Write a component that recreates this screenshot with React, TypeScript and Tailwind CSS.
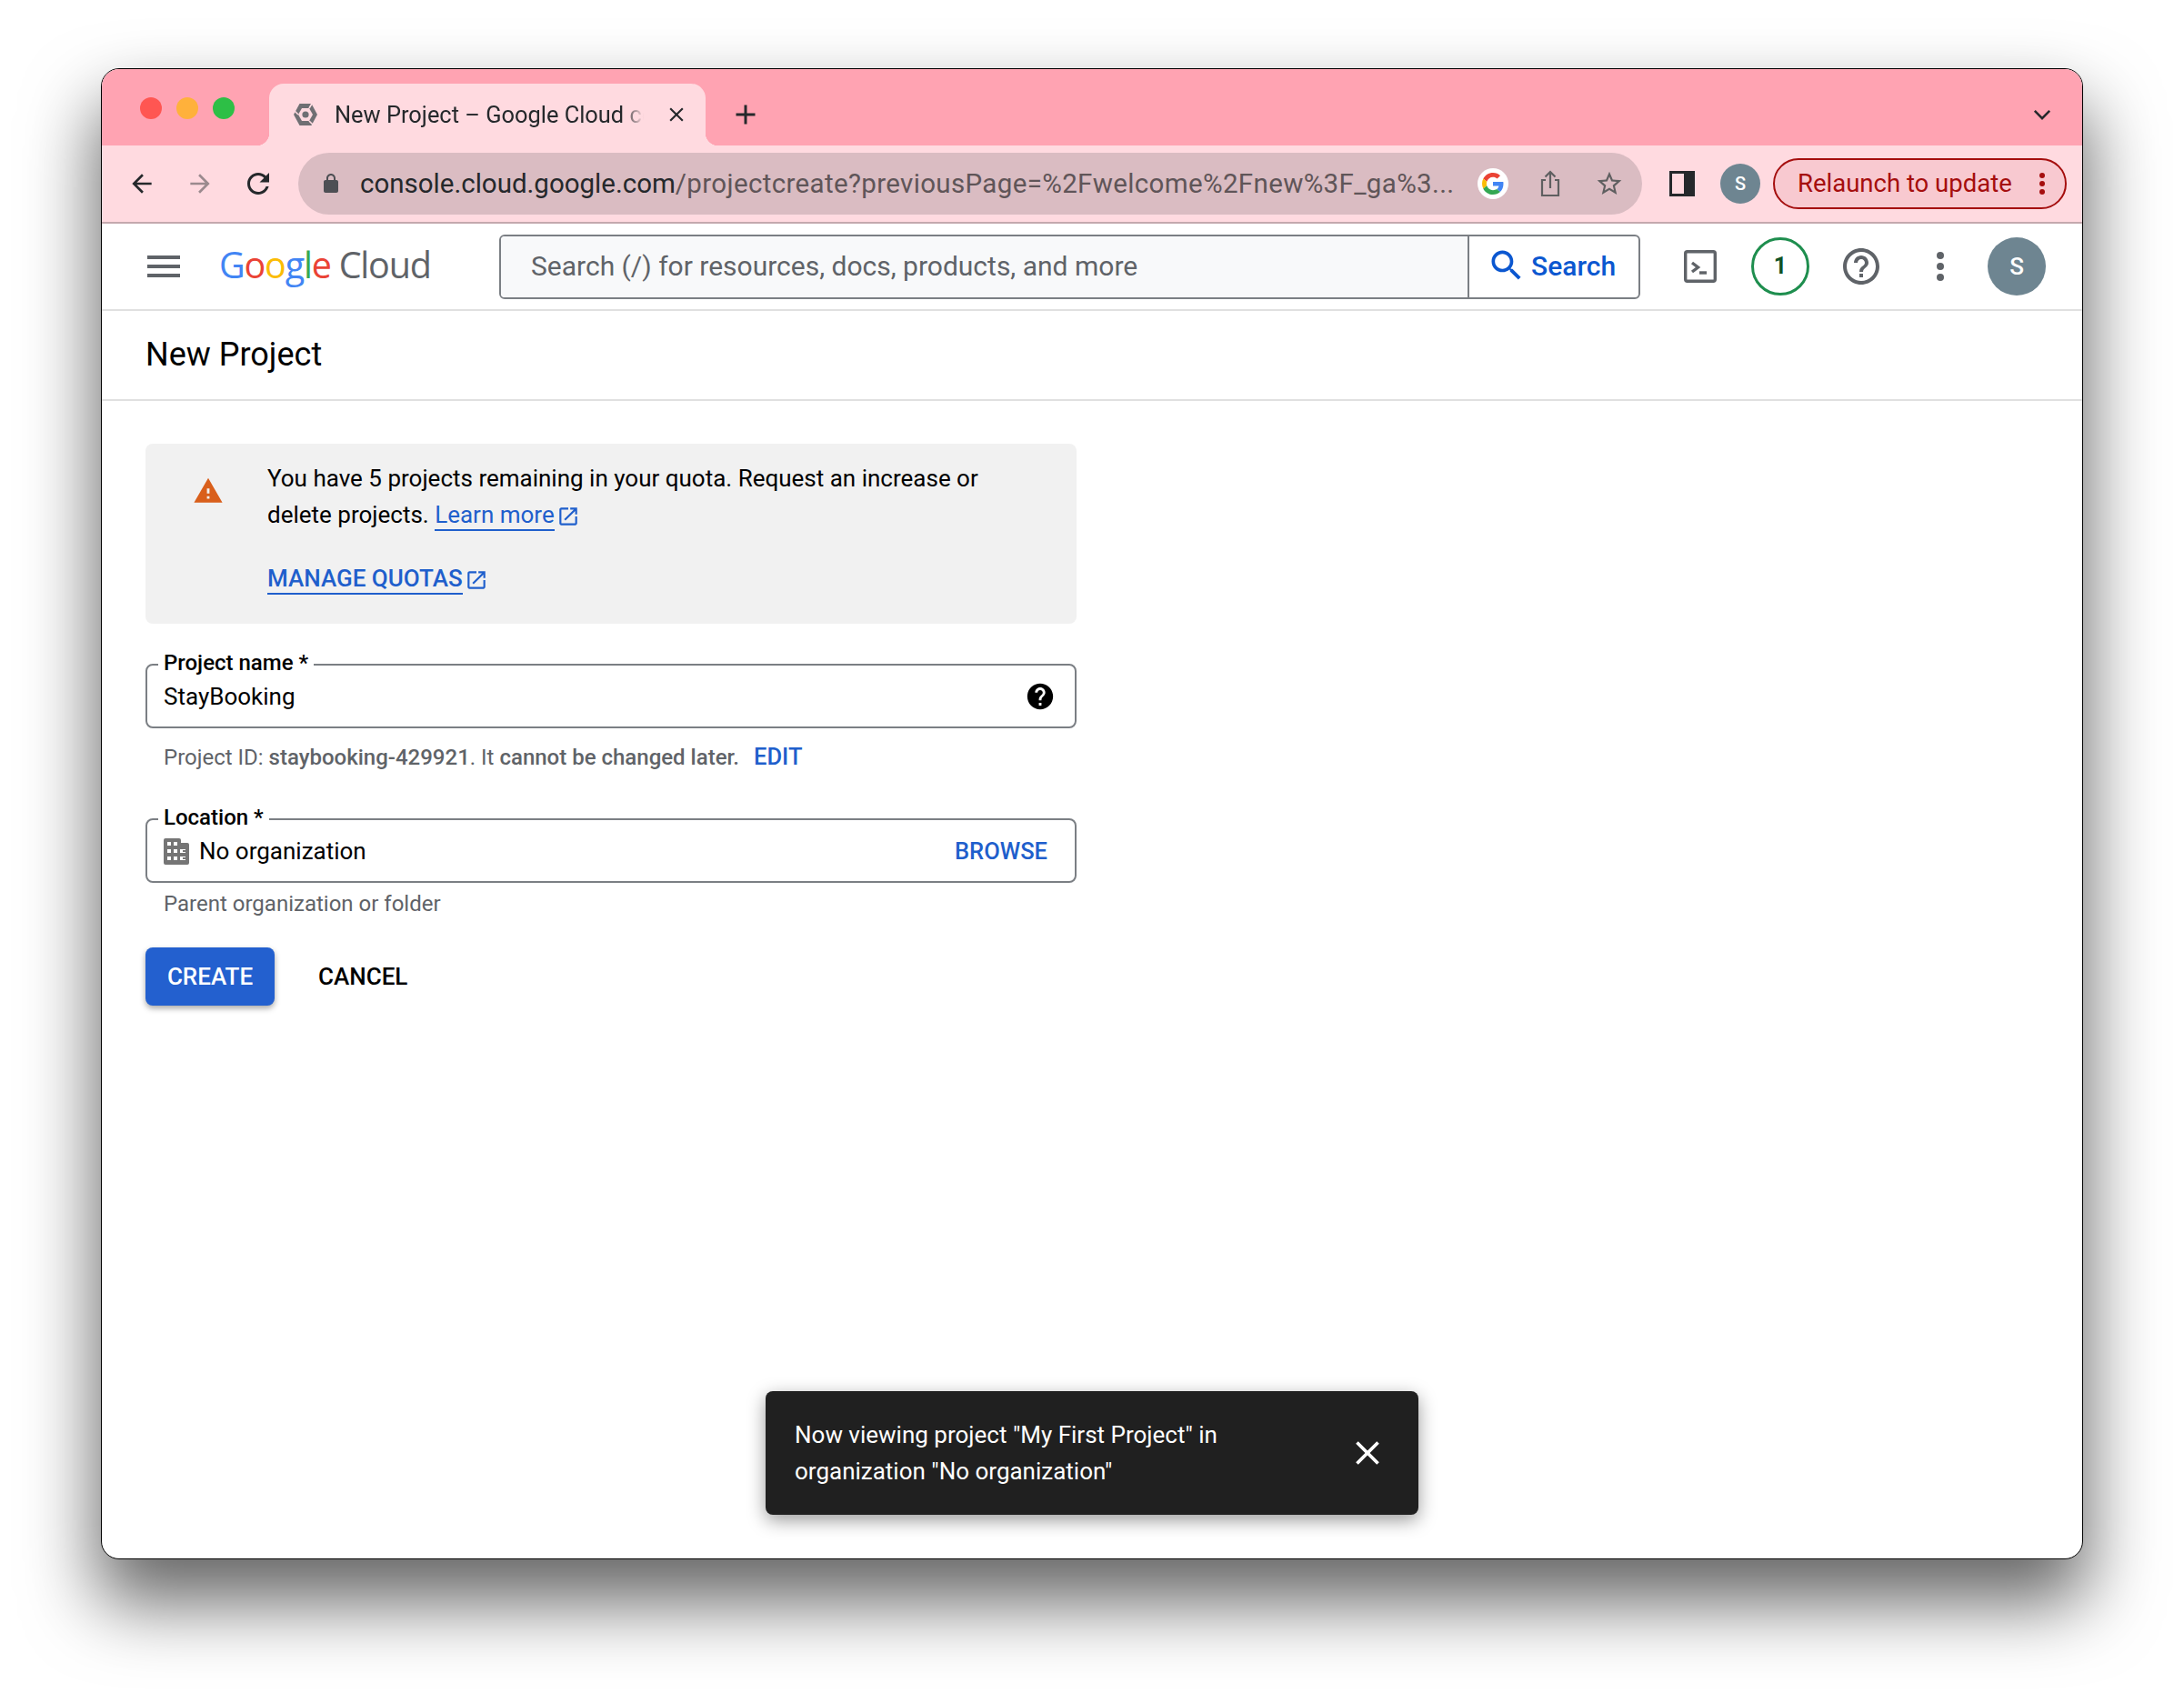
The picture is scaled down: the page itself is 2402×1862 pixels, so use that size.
import type { ReactNode } from "react"

const menuPath = "M3 18h18v-2H3v2zm0-5h18v-2H3v2zm0-7v2h18V6H3z"
const backPath = "M20 11H7.83l5.59-5.59L12 4l-8 8 8 8 1.41-1.41L7.83 13H20v-2z"
const forwardPath = "M12 4l-1.41 1.41L16.17 11H4v2h12.17l-5.58 5.59L12 20l8-8z"
const refreshPath =
  "M17.65 6.35C16.2 4.9 14.21 4 12 4c-4.42 0-7.99 3.58-7.99 8s3.57 8 7.99 8c3.73 0 6.84-2.55 7.73-6h-2.08c-.82 2.33-3.04 4-5.65 4-3.31 0-6-2.69-6-6s2.69-6 6-6c1.66 0 3.14.69 4.22 1.78L13 11h7V4l-2.35 2.35z"
const searchPath =
  "M15.5 14h-.79l-.28-.27C15.41 12.59 16 11.11 16 9.5 16 5.91 13.09 3 9.5 3S3 5.91 3 9.5 5.91 16 9.5 16c1.61 0 3.09-.59 4.23-1.57l.27.28v.79l5 4.99L20.49 19l-4.99-5zm-6 0C7.01 14 5 11.99 5 9.5S7.01 5 9.5 5 14 7.01 14 9.5 11.99 14 9.5 14z"
const helpOutlinePath =
  "M11 18h2v-2h-2v2zm1-16C6.48 2 2 6.48 2 12s4.48 10 10 10 10-4.48 10-10S17.52 2 12 2zm0 18c-4.41 0-8-3.59-8-8s3.59-8 8-8 8 3.59 8 8-3.59 8-8 8zm0-14c-2.21 0-4 1.79-4 4h2c0-1.1.9-2 2-2s2 .9 2 2c0 2-3 1.75-3 5h2c0-2.25 3-2.5 3-5 0-2.21-1.79-4-4-4z"
const helpFilledPath =
  "M12 2C6.48 2 2 6.48 2 12s4.48 10 10 10 10-4.48 10-10S17.52 2 12 2zm1 17h-2v-2h2v2zm2.07-7.75l-.9.92C13.45 12.9 13 13.5 13 15h-2v-.5c0-1.1.45-2.1 1.17-2.83l1.24-1.26c.37-.36.59-.86.59-1.41 0-1.1-.9-2-2-2s-2 .9-2 2H8c0-2.21 1.79-4 4-4s4 1.79 4 4c0 .88-.36 1.68-.93 2.25z"
const warningPath = "M1 21h22L12 2 1 21zm12-3h-2v-2h2v2zm0-4h-2v-4h2v4z"
const openInNewPath =
  "M19 19H5V5h7V3H5c-1.11 0-2 .9-2 2v14c0 1.1.89 2 2 2h14c1.1 0 2-.9 2-2v-7h-2v7zM14 3v2h3.59l-9.83 9.83 1.41 1.41L19 6.41V10h2V3h-7z"
const closePath =
  "M19 6.41L17.59 5 12 10.59 6.41 5 5 6.41 10.59 12 5 17.59 6.41 19 12 13.41 17.59 19 19 17.59 13.41 12z"
const lockPath =
  "M18 8h-1V6c0-2.76-2.24-5-5-5S7 3.24 7 6v2H6c-1.1 0-2 .9-2 2v10c0 1.1.9 2 2 2h12c1.1 0 2-.9 2-2V10c0-1.1-.9-2-2-2zM9 6c0-1.66 1.34-3 3-3s3 1.34 3 3v2H9V6z"
const starPath =
  "M22 9.24l-7.19-.62L12 2 9.19 8.63 2 9.24l5.46 4.73L5.82 21 12 17.27 18.18 21l-1.63-7.03L22 9.24zM12 15.4l-3.76 2.27 1-4.28-3.32-2.88 4.38-.38L12 6.1l1.71 4.04 4.38.38-3.32 2.88 1 4.28L12 15.4z"

function Icon({ d, className }: { d: string; className: string }) {
  return (
    <svg viewBox="0 0 24 24" fill="currentColor" className={className}>
      <path d={d} />
    </svg>
  )
}

function MoreDots({ className }: { className: string }) {
  return (
    <svg viewBox="0 0 8 32" fill="currentColor" className={className}>
      <circle cx="4" cy="4" r="4" />
      <circle cx="4" cy="16" r="4" />
      <circle cx="4" cy="28" r="4" />
    </svg>
  )
}

function BuildingIcon() {
  return (
    <svg viewBox="0 0 28 29" className="h-[29px] w-[28px] shrink-0 text-[#757575]" fill="currentColor">
      <path
        fillRule="evenodd"
        d="M2 0h15a2 2 0 0 1 2 2v3h7a2 2 0 0 1 2 2v20a2 2 0 0 1-2 2H2a2 2 0 0 1-2-2V2a2 2 0 0 1 2-2zM4 4v4h4V4zm7 0v4h4V4zM4 12v4h4v-4zm7 0v4h4v-4zm7 0v4h6v-1h-3v-2h3v-1zM4 20v4h4v-4zm7 0v4h4v-4zm7 0v4h6v-1h-3v-2h3v-1z"
      />
    </svg>
  )
}

function GoogleG() {
  return (
    <div className="flex h-[34px] w-[34px] items-center justify-center rounded-full bg-white">
      <svg viewBox="0 0 48 48" className="h-[24px] w-[24px]">
        <path fill="#EA4335" d="M24 9.5c3.54 0 6.71 1.22 9.21 3.6l6.85-6.85C35.9 2.38 30.47 0 24 0 14.62 0 6.51 5.38 2.56 13.22l7.98 6.19C12.43 13.72 17.74 9.5 24 9.5z" />
        <path fill="#4285F4" d="M46.98 24.55c0-1.57-.15-3.09-.38-4.55H24v9.02h12.94c-.58 2.96-2.26 5.48-4.78 7.18l7.73 6c4.51-4.18 7.09-10.36 7.09-17.65z" />
        <path fill="#FBBC05" d="M10.53 28.59c-.48-1.45-.76-2.99-.76-4.59s.27-3.14.76-4.59l-7.98-6.19C.92 16.46 0 20.12 0 24c0 3.88.92 7.54 2.56 10.78l7.97-6.19z" />
        <path fill="#34A853" d="M24 48c6.48 0 11.93-2.13 15.89-5.81l-7.73-6c-2.15 1.45-4.92 2.3-8.16 2.3-6.26 0-11.57-4.22-13.47-9.91l-7.98 6.19C6.51 42.62 14.62 48 24 48z" />
      </svg>
    </div>
  )
}

function CloudFavicon() {
  return (
    <svg viewBox="0 0 28 28" className="h-[28px] w-[28px] shrink-0" fill="none">
      <path d="M7.5 2h13L27 14l-6.5 12h-13L1 14z" fill="#6f6f73" />
      <path d="M10 7h8l4 7-4 7h-8l-4-7z" fill="#ffdae0" />
      <path d="M6 14L1 9M18 7l3-5M18 21l4 4" stroke="#ffdae0" strokeWidth="1.6" />
      <circle cx="14" cy="14" r="3.6" fill="#6f6f73" />
    </svg>
  )
}

function TabBar() {
  return (
    <div className="flex h-[84px] shrink-0 bg-[#ffa3b2]">
      <div className="flex w-[184px] shrink-0 gap-[16px] pl-[42px] pt-[31px]">
        <span className="h-[24px] w-[24px] rounded-full bg-[#ff5652]" />
        <span className="h-[24px] w-[24px] rounded-full bg-[#ffb13b]" />
        <span className="h-[24px] w-[24px] rounded-full bg-[#2dbf46]" />
      </div>
      <div className="relative mt-auto flex h-[68px] w-[480px] shrink-0 items-center rounded-t-[16px] bg-[#ffdae0] pl-[26px]">
        <span className="absolute bottom-0 left-[-14px] h-[14px] w-[14px] bg-[radial-gradient(circle_at_0_0,#ffa3b2_14px,#ffdae0_14.5px)]" />
        <span className="absolute bottom-0 right-[-14px] h-[14px] w-[14px] bg-[radial-gradient(circle_at_100%_0,#ffa3b2_14px,#ffdae0_14.5px)]" />
        <CloudFavicon />
        <span className="ml-[18px] w-[340px] overflow-hidden whitespace-nowrap text-[25.4px] text-[#25282b] [mask-image:linear-gradient(to_right,black_93%,transparent_100%)]">
          New Project – Google Cloud console
        </span>
        <Icon d={closePath} className="ml-[23px] h-[26px] w-[26px] text-[#25282b]" />
      </div>
      <Icon d="M19 13h-6v6h-2v-6H5v-2h6V5h2v6h6v2z" className="ml-[26px] mt-[32px] h-[36px] w-[36px] text-[#25282b]" />
      <svg viewBox="0 0 24 24" className="ml-auto mr-[30px] mt-[36px] h-[28px] w-[28px]" fill="none" stroke="#25282b" strokeWidth="2.2">
        <path d="M5 8.5l7 7 7-7" />
      </svg>
    </div>
  )
}

function Toolbar() {
  return (
    <div className="flex h-[86px] shrink-0 items-start border-b-2 border-[#c4a9ae] bg-[#ffdae0] pt-[8px]">
      <div className="flex h-[68px] w-[216px] shrink-0 items-center pl-[28px]">
        <Icon d={backPath} className="h-[32px] w-[32px] text-[#25282b]" />
        <Icon d={forwardPath} className="ml-[32px] h-[32px] w-[32px] text-[#9b8a8e]" />
        <Icon d={refreshPath} className="ml-[30px] h-[36px] w-[36px] text-[#25282b]" />
      </div>
      <div className="flex h-[68px] w-[1478px] shrink-0 items-center rounded-full bg-[#dabcc2] pl-[24px]">
        <Icon d={lockPath} className="h-[24px] w-[24px] shrink-0 text-[#4d4f54]" />
        <span className="ml-[20px] whitespace-nowrap text-[29.5px] text-[#25282b]">
          console.cloud.google.com
          <span className="tracking-[0.35px] text-[#5f5558]">/projectcreate?previousPage=%2Fwelcome%2Fnew%3F_ga%3...</span>
        </span>
        <div className="ml-auto flex items-center pr-[20px]">
          <GoogleG />
          <svg viewBox="0 0 24 32" className="ml-[34px] h-[32px] w-[24px]" fill="none" stroke="#5f5f60" strokeWidth="2.2">
            <path d="M7 12H3v17h18V12h-4M12 21V3M6.5 8.5L12 3l5.5 5.5" />
          </svg>
          <Icon d={starPath} className="ml-[37px] h-[32px] w-[32px] text-[#5f5f60]" />
        </div>
      </div>
      <div className="ml-[30px] mt-[20px] flex h-[28px] w-[28px] shrink-0 border-[3px] border-[#25282b] bg-[#25282b]">
        <span className="h-full w-[13px] bg-[#ffdae0]" />
      </div>
      <div className="ml-[28px] mt-[12px] flex h-[44px] w-[44px] shrink-0 items-center justify-center rounded-full bg-[#6e8591] text-[20px] font-medium text-white">
        S
      </div>
      <div className="ml-[14px] mt-[6px] flex h-[56px] w-[323px] shrink-0 items-center rounded-full border-2 border-[#a50e0e] bg-[#f8c9d0] pl-[25px] text-[27.5px] text-[#a50e0e]">
        Relaunch to update
        <MoreDots className="ml-[30px] h-[24px] w-[6px]" />
      </div>
    </div>
  )
}

function GoogleLogo() {
  return (
    <div className="flex w-[234px] items-baseline whitespace-nowrap pb-[2px] font-['Open_Sans',sans-serif] text-[39.5px] tracking-[-1.2px]">
      <span className="text-[#4285f4]">G</span>
      <span className="text-[#ea4335]">o</span>
      <span className="text-[#fbbc05]">o</span>
      <span className="text-[#4285f4]">g</span>
      <span className="text-[#34a853]">l</span>
      <span className="text-[#ea4335]">e</span>
      <span className="ml-[9px] text-[#5f6368]">Cloud</span>
    </div>
  )
}

function ConsoleHeader() {
  return (
    <div className="flex h-[96px] shrink-0 items-center border-b-2 border-[#e0e0e0] bg-white">
      <Icon d={menuPath} className="ml-[44px] h-[48px] w-[48px] text-[#5f6368]" />
      <div className="ml-[37px]">
        <GoogleLogo />
      </div>
      <div className="ml-[74px] flex h-[71px] w-[1255px] overflow-hidden rounded-[6px] border-2 border-[#7b7f84]">
        <div className="flex w-[1065px] items-center border-r-2 border-[#7b7f84] bg-[#f8f9fa] pb-[2px] pl-[33px] text-[30px] text-[#5f6368]">
          Search (/) for resources, docs, products, and more
        </div>
        <div className="flex items-center pb-[2px] pl-[19px] text-[30px] font-medium text-[#0b57d0]">
          <Icon d={searchPath} className="h-[44px] w-[44px]" />
          <span className="ml-[5px]">Search</span>
        </div>
      </div>
      <svg viewBox="0 0 36 36" className="ml-[48px] h-[36px] w-[36px]" fill="none">
        <rect x="1.7" y="1.7" width="32.6" height="32.6" rx="2" stroke="#5f6368" strokeWidth="3.4" />
        <path d="M9 14l6.5 5L9 24" stroke="#5f6368" strokeWidth="3.4" />
        <path d="M17 25h8" stroke="#5f6368" strokeWidth="3.4" />
      </svg>
      <div className="ml-[38px] flex h-[64px] w-[64px] items-center justify-center rounded-full border-[3.5px] border-[#1e8e4e] text-[25px] font-bold text-[#0d5226]">
        1
      </div>
      <Icon d={helpOutlinePath} className="ml-[33px] h-[48px] w-[48px] text-[#5f6368]" />
      <MoreDots className="ml-[59px] h-[32px] w-[8px] text-[#5f6368]" />
      <div className="ml-[48px] flex h-[64px] w-[64px] items-center justify-center rounded-full bg-[#6e8591] text-[26px] font-medium text-white">
        S
      </div>
    </div>
  )
}

function ExternalLink({ children }: { children: ReactNode }) {
  return (
    <span className="inline-flex items-center text-[#1f5fcc]">
      <span className="border-b-2 border-[#1f5fcc] leading-[31px]">{children}</span>
      <Icon d={openInNewPath} className="ml-[2px] h-[26px] w-[26px]" />
    </span>
  )
}

function Field({ label, children }: { label: string; children: ReactNode }) {
  return (
    <div className="relative flex h-[71px] items-center rounded-[8px] border-2 border-[#7b7f84] pl-[18px] pr-[21px] pt-[1px] text-[26px] text-black">
      <span className="absolute left-[12px] top-[-18px] bg-white px-[6px] text-[24px] font-medium leading-[30px]">{label}</span>
      {children}
    </div>
  )
}

function ProjectForm() {
  return (
    <div className="ml-[48px] w-[1024px] pt-[47px]">
      <div className="flex h-[198px] rounded-[8px] bg-[#f1f1f1] pt-[18px] text-[26px] leading-[40px] text-black">
        <Icon d={warningPath} className="ml-[52px] mt-[17px] h-[34px] w-[34px] shrink-0 text-[#d95f1b]" />
        <div className="ml-[48px]">
          <p className="whitespace-nowrap">You have 5 projects remaining in your quota. Request an increase or</p>
          <p className="whitespace-nowrap">
            delete projects. <ExternalLink>Learn more</ExternalLink>
          </p>
          <p className="mt-[30px] font-medium">
            <ExternalLink>MANAGE QUOTAS</ExternalLink>
          </p>
        </div>
      </div>

      <div className="mt-[44px]">
        <Field label="Project name *">
          <span>StayBooking</span>
          <Icon d={helpFilledPath} className="ml-auto h-[34px] w-[34px]" />
        </Field>
        <p className="mt-[16px] pl-[20px] text-[24px] leading-[30px] text-[#5f6368]">
          Project ID: <span className="font-medium">staybooking-429921</span>. It <span className="font-medium">cannot be changed later.</span>
          <span className="ml-[16px] text-[25.5px] font-medium text-[#1f5fcc]">EDIT</span>
        </p>
      </div>

      <div className="mt-[52px]">
        <Field label="Location *">
          <BuildingIcon />
          <span className="ml-[11px]">No organization</span>
          <span className="ml-auto mr-[9px] text-[25.5px] font-medium text-[#1f5fcc]">BROWSE</span>
        </Field>
        <p className="mt-[8px] pl-[20px] text-[24px] leading-[30px] text-[#5f6368]">Parent organization or folder</p>
      </div>

      <div className="mt-[33px] flex items-center text-[26px] font-medium">
        <div className="flex h-[64px] w-[142px] items-center justify-center rounded-[8px] bg-[#2360cf] text-white shadow-[0_3px_6px_rgba(0,0,0,0.35)]">
          CREATE
        </div>
        <span className="ml-[48px] text-black">CANCEL</span>
      </div>
    </div>
  )
}

export default function App() {
  return (
    <div className="h-[1862px] w-[2402px] overflow-hidden bg-white pl-[111px] pt-[75px] font-['Roboto',sans-serif]">
      <div className="relative flex h-[1640px] w-[2180px] flex-col overflow-hidden rounded-[20px] border border-black bg-white shadow-[0_44px_80px_4px_rgba(0,0,0,0.6)]">
        <TabBar />
        <Toolbar />
        <ConsoleHeader />
        <div className="flex h-[99px] shrink-0 items-center border-b-2 border-[#e0e0e0] pl-[48px] pb-[2px] text-[36px] text-black">
          New Project
        </div>
        <ProjectForm />
        <div className="absolute bottom-[48px] left-[730px] flex h-[136px] w-[718px] items-center rounded-[8px] bg-[#202020] pl-[32px] text-[26px] leading-[40px] text-white shadow-[0_6px_20px_rgba(0,0,0,0.4)]">
          <p>
            Now viewing project "My First Project" in
            <br />
            organization "No organization"
          </p>
          <Icon d={closePath} className="ml-auto mr-[34px] h-[44px] w-[44px]" />
        </div>
      </div>
    </div>
  )
}
